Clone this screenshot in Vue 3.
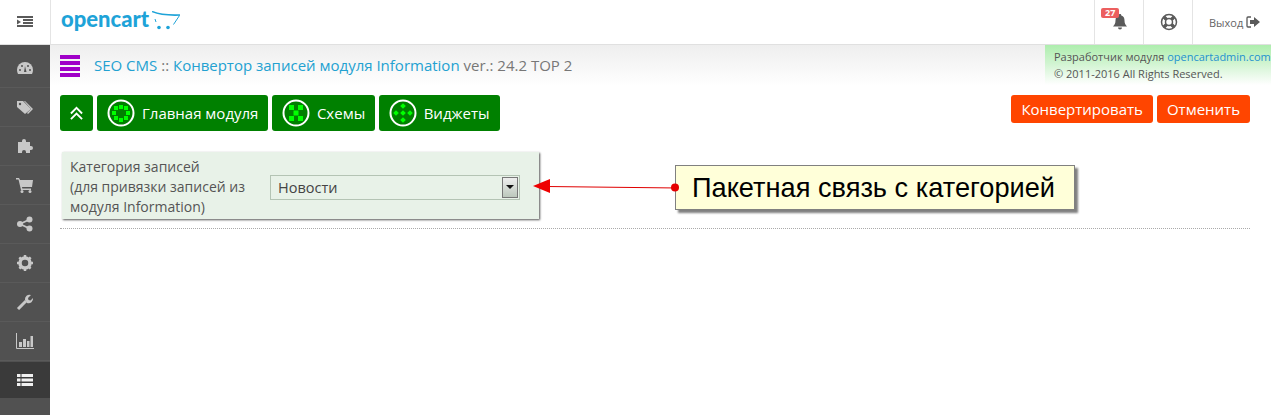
<template>
  <div class="page">
    <header class="topbar">
      <div class="toggle">
        <svg width="16" height="14" viewBox="0 0 16 14" fill="#5a5a5a">
          <rect y="1" width="16" height="2" />
          <rect x="6" y="4" width="10" height="2" />
          <rect x="6" y="7" width="10" height="2" />
          <rect y="10" width="16" height="2" />
          <path d="M0 4.500l4 2.500-4 2.500z" />
        </svg>
      </div>
      <div class="logo">
        <span class="logo-text">opencart</span>
        <svg class="logo-cart" width="29" height="19" viewBox="0 0 29 19" fill="none">
          <path d="M0 .5c7 3 15 4 28 3.500" stroke="#1ea3d8" stroke-width="1.600" />
          <path d="M27.500 4.500l-6 9" stroke="#1ea3d8" stroke-width="1" />
          <path d="M3 8l1 3" stroke="#1ea3d8" stroke-width="1" />
          <circle cx="7" cy="16.500" r="1.800" fill="#1ea3d8" />
          <circle cx="16" cy="16.500" r="1.800" fill="#1ea3d8" />
        </svg>
      </div>
      <div class="top-actions">
        <div class="top-action">
          <span class="badge">27</span>
          <svg width="16" height="16" viewBox="0 0 16 16" fill="#5a5a5a">
            <path d="M8 0c1 0 1.300.7 1.300 1.400C11.600 2 12.500 4 12.500 6.500c0 3 1 4.500 2.500 6H1c1.500-1.500 2.500-3 2.500-6C3.500 4 4.400 2 6.700 1.400 6.700.7 7 0 8 0zM6 13.500h4a2 2 0 0 1-4 0z" />
          </svg>
        </div>
        <div class="top-action">
          <svg width="18" height="18" viewBox="0 0 18 18" fill="none">
            <circle cx="9" cy="9" r="7.500" stroke="#5a5a5a" stroke-width="1.500" />
            <circle cx="9" cy="9" r="3.500" stroke="#5a5a5a" stroke-width="1.500" />
            <path d="M4 4l2.500 2.500M14 4l-2.500 2.500M4 14l2.500-2.500M14 14l-2.500-2.500" stroke="#5a5a5a" stroke-width="3.500" />
          </svg>
        </div>
        <div class="top-action logout">
          <span>Выход</span>
          <svg width="14" height="12" viewBox="0 0 14 12" fill="#5a5a5a">
            <path d="M5 1H2a1 1 0 0 0-1 1v8a1 1 0 0 0 1 1h3" fill="none" stroke="#5a5a5a" stroke-width="1.300" />
            <path d="M4 4h4V1l6 5-6 5V8H4z" />
          </svg>
        </div>
      </div>
    </header>

    <div class="body">
      <nav class="sidebar">
        <div v-for="item in menu" :key="item.name" class="nav-item" :class="{ active: item.active }">
          <svg width="18" height="16" viewBox="0 0 18 16" v-html="item.svg"></svg>
        </div>
      </nav>

      <main class="content">
        <div class="title-row">
          <div class="burger">
            <span></span><span></span><span></span><span></span>
          </div>
          <h1 class="title">
            <a>SEO CMS</a> :: <a>Конвертор записей модуля Information</a> ver.: 24.2 TOP 2
          </h1>
          <div class="credit">
            <div>Разработчик модуля <a>opencartadmin.com</a></div>
            <div>© 2011-2016 All Rights Reserved.</div>
          </div>
        </div>

        <div class="toolbar">
          <div class="tabs">
            <button class="tab tab-up" type="button">
              <svg width="14" height="15" viewBox="0 0 14 15" fill="none" stroke="#fff" stroke-width="2">
                <path d="M1 7.500l6-6 6 6M1 13.500l6-6 6 6" />
              </svg>
            </button>
            <button v-for="tab in tabs" :key="tab.label" class="tab" type="button">
              <svg width="28" height="28" viewBox="0 0 28 28">
                <circle cx="14" cy="14" r="12.500" fill="none" stroke="#fff" stroke-width="2" />
                <rect
                  v-for="(s, i) in tab.squares"
                  :key="i"
                  :x="s[0]"
                  :y="s[1]"
                  :width="tab.size"
                  :height="tab.size"
                  :transform="tab.diamond ? `rotate(45 ${s[0] + tab.size / 2} ${s[1] + tab.size / 2})` : null"
                  fill="#00ff00"
                />
              </svg>
              <span>{{ tab.label }}</span>
            </button>
          </div>
          <div class="actions">
            <button class="action" type="button">Конвертировать</button>
            <button class="action" type="button">Отменить</button>
          </div>
        </div>

        <div class="panel">
          <label class="panel-label">Категория записей<br />(для привязки записей из<br />модуля Information)</label>
          <div class="fake-select">
            <span>Новости</span>
            <i class="select-btn"></i>
          </div>
        </div>
        <div class="divider"></div>
      </main>
    </div>

    <div class="note">Пакетная связь с категорией</div>
    <svg class="pointer" width="150" height="20" viewBox="0 0 150 20">
      <path d="M14 7.500L145 9" stroke="#e00000" stroke-width="1" fill="none" />
      <path d="M0 7l17-7v14z" fill="#ee0000" />
      <circle cx="142" cy="8.500" r="4" fill="#e60000" />
    </svg>
  </div>
</template>

<script setup>
const stroke = 'fill="#c8c8c8"'
const menu = [
  { name: 'dashboard', svg: `<path ${stroke} d="M9 2a8 8 0 0 0-8 8c0 1.500.4 2.800 1 4h14c.6-1.200 1-2.500 1-4a8 8 0 0 0-8-8z"/><g fill="#515151"><circle cx="4" cy="10" r="1"/><circle cx="6" cy="6" r="1"/><circle cx="12" cy="6" r="1"/><circle cx="14" cy="10" r="1"/><path d="M8 12l1-6 1.500 6z"/></g>` },
  { name: 'tags', svg: `<path ${stroke} d="M1 2h6l8 8-6 5-8-7z"/><circle cx="4" cy="5" r="1.200" fill="#515151"/><path d="M9 2l8 8-5 5-1-1 4-4-7-8z" ${stroke}/>` },
  { name: 'puzzle', svg: `<path ${stroke} d="M2 4h4V3a2 2 0 0 1 4 0v1h4v4h1a2 2 0 0 1 0 4h-1v3h-4v-1a2 2 0 0 0-4 0v1H2z"/>` },
  { name: 'cart', svg: `<path ${stroke} d="M0 1h3l1 2h13l-1 7H6l.3 1.500H15V13H5L2.500 2.500H0z"/><circle cx="6" cy="14.500" r="1.500" ${stroke}/><circle cx="14" cy="14.500" r="1.500" ${stroke}/>` },
  { name: 'share', svg: `<circle cx="13.500" cy="3.500" r="3" ${stroke}/><circle cx="4" cy="8" r="3" ${stroke}/><circle cx="13.500" cy="12.500" r="3" ${stroke}/><path d="M13.500 3.500L4 8l9.500 4.500" stroke="#c8c8c8" stroke-width="1.800" fill="none"/>` },
  { name: 'gear', svg: `<circle cx="9" cy="8" r="5" fill="none" stroke="#c8c8c8" stroke-width="3.500"/><path d="M9 0v16M1 8h16M3.300 2.300l11.400 11.400M14.700 2.300L3.300 13.700" stroke="#c8c8c8" stroke-width="2.500" stroke-dasharray="2.500 11" fill="none"/>` },
  { name: 'wrench', svg: `<path d="M2 15L10 7" stroke="#c8c8c8" stroke-width="3" fill="none"/><path ${stroke} d="M9 6a4.500 4.500 0 0 1 6-5l-3 3 .5 2 2 .5 2.500-2.500A4.500 4.500 0 0 1 11 9z"/>` },
  { name: 'chart', svg: `<path d="M.5 0v15.500H18" stroke="#c8c8c8" fill="none"/><path d="M3 9h3v5H3zM7 6h3v8H7zM11 8h2.500v6H11zM14.500 3H17v11h-2.500z" ${stroke}/>` },
  { name: 'list', active: true, svg: `<path d="M1 2h16v3H1zM1 6.500h16v3H1zM1 11h16v3H1z" fill="#f0f0f0"/><path d="M5 2v12" stroke="#3a3a3a"/>` },
]

const tabs = [
  { label: 'Главная модуля', size: 4, squares: [[12, 6], [17, 7], [19, 12], [17, 17], [12, 19], [7, 17], [5, 12], [7, 7]] },
  { label: 'Схемы', size: 5, squares: [[7, 6], [16, 6], [11.500, 11.500], [7, 17], [16, 17]] },
  { label: 'Виджеты', size: 4, diamond: true, squares: [[12, 5], [5, 12], [12, 12], [19, 12], [12, 19]] },
]
</script>

<style>
html,
body {
  margin: 0;
  background: #fff;
  overflow: hidden;
}
</style>

<style scoped>
.page {
  position: relative;
  width: 1271px;
  height: 415px;
  overflow: hidden;
  font-family: 'Open Sans', sans-serif;
  color: #666;
}

.topbar {
  display: flex;
  height: 44px;
  border-bottom: 1px solid #e0e0e0;
  box-sizing: content-box;
}

.toggle {
  display: flex;
  align-items: center;
  justify-content: center;
  width: 51px;
  border-right: 1px solid #e4e4e4;
  box-sizing: border-box;
}

.logo {
  display: flex;
  align-items: flex-start;
  padding: 6px 0 0 10px;
}

.logo-text {
  font-family: Lato, sans-serif;
  font-weight: 900;
  font-size: 22px;
  line-height: 26px;
  color: #1ea3d8;
}

.logo-cart {
  margin: 5px 0 0 3px;
}

.top-actions {
  display: flex;
  margin-left: auto;
}

.top-action {
  position: relative;
  display: flex;
  align-items: center;
  justify-content: center;
  gap: 3px;
  width: 49px;
  border-left: 1px solid #e4e4e4;
  box-sizing: border-box;
  padding-left: 2px;
}

.logout {
  width: 79px;
  justify-content: flex-start;
  padding-left: 16px;
  font-size: 11px;
  color: #666;
}

.badge {
  position: absolute;
  top: 8px;
  left: 6px;
  padding: 0 4px;
  border-radius: 2px;
  background: #ec5f5f;
  color: #fff;
  font-size: 9px;
  font-weight: 700;
  line-height: 10px;
}

.body {
  display: flex;
  height: 370px;
}

.sidebar {
  width: 50px;
  flex: none;
  background: #515151;
  padding-top: 4px;
  box-sizing: border-box;
}

.nav-item {
  display: flex;
  align-items: center;
  justify-content: center;
  height: 38px;
  border-bottom: 1px solid #5a5a5a;
}

.nav-item.active {
  height: 36px;
  margin-top: 1px;
  background: #3a3a3a;
  border-bottom: 0;
}

.content {
  flex: 1;
  min-width: 0;
  padding: 0 21px 0 10px;
}

.title-row {
  position: relative;
  display: flex;
  align-items: center;
  height: 41px;
  margin: 0 -21px 0 -10px;
  padding-left: 10px;
  background: linear-gradient(#eeeeee, #fff);
}

.burger {
  display: flex;
  flex-direction: column;
  gap: 2px;
  width: 20px;
  margin-right: 14px;
}

.burger span {
  display: block;
  height: 4px;
  background: #a000c8;
}

.title {
  margin: -2px 0 0;
  font-size: 15px;
  font-weight: 400;
  color: #777;
  white-space: nowrap;
}

.title a {
  color: #23a1d1;
}

.credit {
  position: absolute;
  top: 0;
  right: 0;
  width: 226px;
  height: 40px;
  padding: 3px 0 0 9px;
  box-sizing: border-box;
  background: linear-gradient(#aeeeae, #d0f4d0 45%, #fff);
  font-size: 11px;
  line-height: 17px;
  color: #555;
  white-space: nowrap;
  overflow: hidden;
}

.credit a {
  color: #1e91cf;
}

.toolbar {
  display: flex;
  justify-content: space-between;
  align-items: flex-start;
  margin-top: 9px;
}

.tabs,
.actions {
  display: flex;
}

.tabs {
  gap: 3.500px;
}

.actions {
  gap: 4px;
}

.tab {
  display: flex;
  align-items: center;
  gap: 7px;
  height: 36px;
  padding: 0 10px;
  border: 0;
  border-radius: 3px;
  background: #008000;
  color: #fff;
  font-family: inherit;
  font-size: 15px;
}

.tab-up {
  width: 33px;
  margin-right: 0.500px;
  justify-content: center;
}

.action {
  height: 28px;
  padding: 0 10px;
  border: 0;
  border-radius: 3px;
  background: #ff4500;
  color: #fff;
  font-family: inherit;
  font-size: 15px;
}

.panel {
  display: flex;
  align-items: center;
  width: 477px;
  height: 67px;
  margin: 21px 0 0 2px;
  padding: 0 19px 0 8px;
  box-sizing: border-box;
  background: #e8f2e8;
  box-shadow: 1px 1px 2px #555;
  font-size: 14px;
  line-height: 20px;
  color: #555;
}

.panel-label {
  width: 200px;
  flex: none;
  padding-top: 2px;
  white-space: nowrap;
}

.fake-select {
  display: flex;
  align-items: center;
  justify-content: space-between;
  flex: 1;
  height: 25px;
  margin-top: 4px;
  padding: 0 1px 0 7px;
  border: 1px solid #b4c4b4;
  box-sizing: border-box;
  font-size: 14.500px;
  color: #444;
}

.select-btn {
  position: relative;
  width: 16px;
  height: 21px;
  border: 1px solid #777;
  box-sizing: border-box;
  background: linear-gradient(#eee, #bcc8bc);
}

.select-btn::after {
  content: '';
  position: absolute;
  top: 7px;
  left: 3px;
  border: 4px solid transparent;
  border-top-color: #111;
}

.divider {
  margin-top: 9px;
  border-top: 1px dotted #aaa;
}

.pointer {
  position: absolute;
  left: 533px;
  top: 179px;
}

.note {
  position: absolute;
  left: 675px;
  top: 165px;
  width: 400px;
  height: 45px;
  padding-left: 16px;
  box-sizing: border-box;
  background: #ffffd9;
  border: 1px solid #808080;
  box-shadow: 3px 3px 2px #808080;
  font-family: 'Liberation Sans', sans-serif;
  font-size: 27.200px;
  line-height: 44px;
  color: #000;
  white-space: nowrap;
}
</style>
